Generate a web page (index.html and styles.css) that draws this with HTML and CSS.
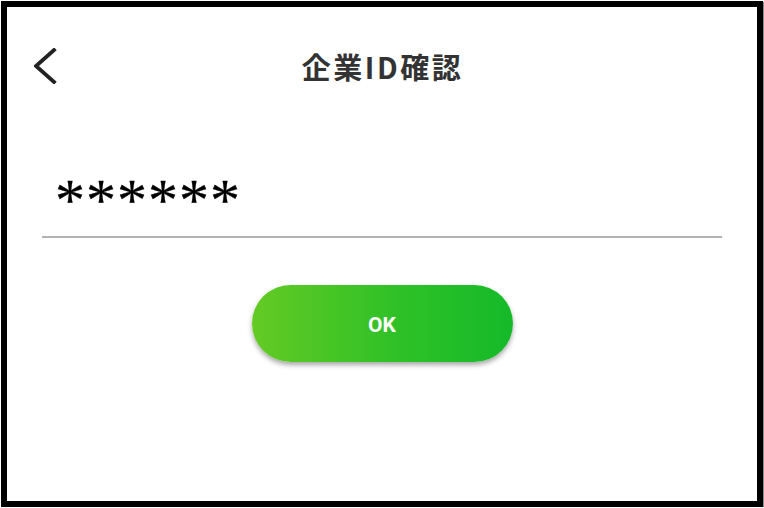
FILE: index.html
```html
<!DOCTYPE html>
<html lang="ja">
<head>
<meta charset="utf-8">
<title>企業ID確認</title>
<link rel="stylesheet" href="styles.css">
</head>
<body>
<div class="frame">
  <header class="header">
    <button class="back" aria-label="戻る">
      <svg width="24" height="36" viewBox="0 0 24 36"><polyline points="20,2 2,18 20,34" fill="none" stroke="#222" stroke-width="3.8" stroke-linecap="square" stroke-linejoin="miter"/></svg>
    </button>
    <h1 class="title">企業ID確認</h1>
    <span class="spacer"></span>
  </header>
  <div class="field">
    <span class="masked">******</span>
  </div>
  <div class="actions">
    <button class="ok">OK</button>
  </div>
</div>
</body>
</html>
```
FILE: styles.css
```css
html, body {
  margin: 0;
  padding: 0;
  background: #fff;
}
.frame {
  margin: 1px 0 0 1px;
  width: 762px;
  height: 506px;
  box-sizing: border-box;
  border: 6px solid #000;
  box-shadow: 1px 1px 1px rgba(0,0,0,0.45);
  background: #fff;
  display: flex;
  flex-direction: column;
}
.header {
  height: 118px;
  display: grid;
  grid-template-columns: 1fr auto 1fr;
  align-items: center;
  padding: 0 27px;
}
.back {
  justify-self: start;
  background: none;
  border: 0;
  padding: 0;
  margin: 0;
  display: flex;
  width: 24px;
  height: 36px;
  cursor: pointer;
}
.title {
  margin: 0;
  font-family: "Noto Sans CJK JP", "Noto Sans", sans-serif;
  font-weight: 700;
  font-size: 29px;
  letter-spacing: 2.5px;
  color: #333;
  line-height: 1;
  padding-left: 1px;
}
.field {
  margin: 0 35px;
  height: 111px;
  border-bottom: 2px solid #b3b3b3;
  display: flex;
  align-items: flex-end;
  padding-left: 13px;
}
.masked {
  font-family: "Liberation Serif", serif;
  font-size: 60px;
  font-weight: 400;
  letter-spacing: 1px;
  -webkit-text-stroke: 0.3px #000;
  color: #000;
  line-height: 1;
  margin-bottom: 6px;
}
.actions {
  display: flex;
  justify-content: center;
  padding-top: 47px;
}
.ok {
  width: 261px;
  height: 77px;
  border: 0;
  border-radius: 39px;
  background: linear-gradient(90deg, #64ca24 0%, #2fc127 55%, #15ba29 100%);
  box-shadow: 0 3px 5px rgba(0,0,0,0.35);
  color: #fff;
  font-family: Roboto, "Liberation Sans", sans-serif;
  font-weight: 700;
  font-size: 21px;
  padding: 2px 0 0;
}
```
